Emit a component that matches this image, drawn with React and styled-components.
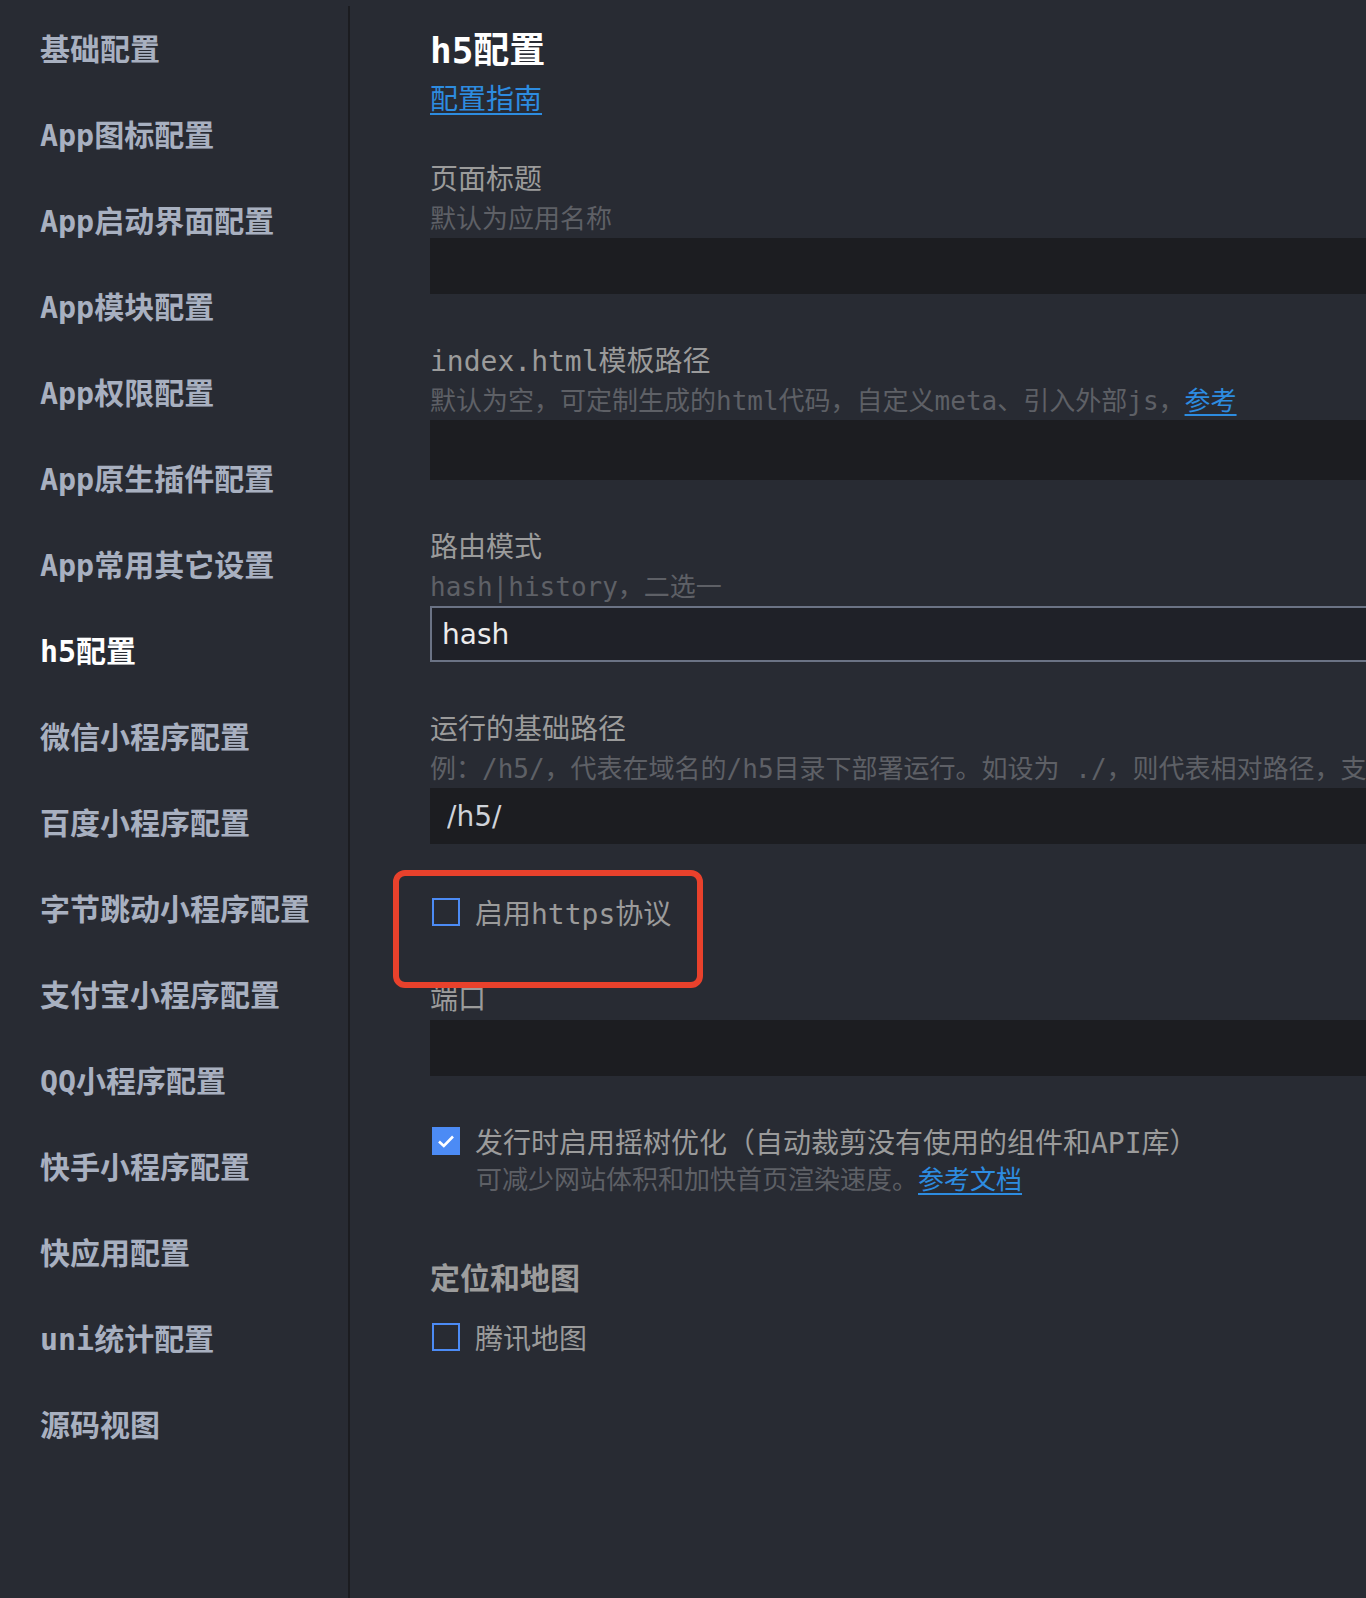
import React, { useState } from 'react';
import styled, { createGlobalStyle } from 'styled-components';

const GlobalStyle = createGlobalStyle`
  html, body {
    margin: 0;
    padding: 0;
    background-color: #282b33;
  }
  body {
    font-family: 'DejaVu Sans Mono', 'Noto Sans CJK SC', monospace;
    overflow-x: hidden;
  }
  * {
    box-sizing: border-box;
  }
`;

const StyledPage = styled.div`
  display: flex;
  min-height: 100vh;
  overflow: hidden;
  background-color: #282b33;
`;

const StyledSidebar = styled.nav`
  flex-shrink: 0;
  width: 350px;
  margin-top: 6px;
  padding-top: 0;
  border-right: 2px solid #1b1c20;
`;

const StyledNavList = styled.div`
  margin-top: -2px;
`;

const StyledNavItem = styled.div`
  display: flex;
  align-items: center;
  height: 86px;
  padding-left: 40px;
  font-family: 'DejaVu Sans Mono', 'Noto Sans CJK SC', monospace;
  font-size: 30px;
  font-weight: 700;
  color: ${(props) => (props.$active ? '#ffffff' : '#a8b0c0')};
  white-space: nowrap;
  cursor: pointer;
`;

const StyledMain = styled.main`
  flex: 1;
  min-width: 0;
  padding: 29px 0 60px 80px;
  overflow: hidden;
`;

const StyledTitle = styled.h1`
  margin: 0;
  font-size: 36px;
  line-height: 44px;
  font-weight: 700;
  color: #ffffff;
`;

const StyledLink = styled.a`
  color: #2d8ce0;
  text-decoration: underline;
  text-decoration-thickness: 2px;
  text-underline-offset: 4px;
  cursor: pointer;
`;

const StyledGuide = styled.div`
  margin: 9px 0 42px;
  font-size: 28px;
  line-height: 36px;
`;

const StyledField = styled.div`
  width: 1100px;
  margin-bottom: ${(props) => (props.$gap !== undefined ? props.$gap : 48)}px;
`;

const StyledLabel = styled.div`
  font-size: 28px;
  line-height: 40px;
  color: #9b9b9b;
  white-space: nowrap;
`;

const StyledDesc = styled.div`
  font-size: 26px;
  line-height: 38px;
  color: #5e6066;
  white-space: nowrap;
`;

const StyledInput = styled.input`
  display: block;
  width: 100%;
  height: ${(props) => props.$height || 56}px;
  padding: 0 ${(props) => (props.$focused ? 10 : 17)}px;
  font-family: 'DejaVu Sans', 'Noto Sans CJK SC', sans-serif;
  font-size: 28px;
  color: ${(props) => (props.$focused ? '#ececec' : '#cfd3da')};
  background-color: ${(props) => (props.$focused ? '#1f2128' : '#1c1d21')};
  border: ${(props) => (props.$focused ? '2px solid #6b7385' : 'none')};
  outline: none;
`;

const StyledCheckRow = styled.label`
  position: relative;
  display: flex;
  align-items: center;
  gap: 15px;
  height: 40px;
  padding-left: 2px;
  font-size: 28px;
  color: #9b9b9b;
  white-space: nowrap;
  cursor: pointer;
`;

const StyledBox = styled.span`
  display: flex;
  align-items: center;
  justify-content: center;
  flex-shrink: 0;
  width: 28px;
  height: 28px;
  border: 2px solid #4c8bf5;
  background-color: ${(props) => (props.$checked ? '#4c8bf5' : 'transparent')};
`;

const StyledSubDesc = styled(StyledDesc)`
  padding-left: 46px;
`;

const StyledHighlight = styled.span`
  position: absolute;
  left: -37px;
  top: -22px;
  width: 310px;
  height: 118px;
  border: 6px solid #e8412c;
  border-radius: 12px;
  pointer-events: none;
`;

const StyledHeading = styled.div`
  margin: 60px 0 18px;
  font-size: 30px;
  line-height: 40px;
  font-weight: 700;
  color: #9d9d9d;
`;

const navItems = [
  '基础配置',
  'App图标配置',
  'App启动界面配置',
  'App模块配置',
  'App权限配置',
  'App原生插件配置',
  'App常用其它设置',
  'h5配置',
  '微信小程序配置',
  '百度小程序配置',
  '字节跳动小程序配置',
  '支付宝小程序配置',
  'QQ小程序配置',
  '快手小程序配置',
  '快应用配置',
  'uni统计配置',
  '源码视图',
];

const Checkbox = ({ checked, onChange, children, highlight }) => (
  <StyledCheckRow onClick={onChange}>
    <StyledBox $checked={checked}>
      {checked && (
        <svg width='18' height='14' viewBox='0 0 18 14'>
          <path d='M2 7.5 L6.8 12 L16 2.5' fill='none' stroke='#fff' strokeWidth='2.6' />
        </svg>
      )}
    </StyledBox>
    {children}
    {highlight && <StyledHighlight />}
  </StyledCheckRow>
);

const App = () => {
  const [active, setActive] = useState('h5配置');
  const [https, setHttps] = useState(false);
  const [treeShaking, setTreeShaking] = useState(true);
  const [tencentMap, setTencentMap] = useState(false);

  return (
    <StyledPage>
      <GlobalStyle />
      <StyledSidebar>
        <StyledNavList>
          {navItems.map((item) => (
            <StyledNavItem key={item} $active={item === active} onClick={() => setActive(item)}>
              {item}
            </StyledNavItem>
          ))}
        </StyledNavList>
      </StyledSidebar>
      <StyledMain>
        <StyledTitle>h5配置</StyledTitle>
        <StyledGuide>
          <StyledLink>配置指南</StyledLink>
        </StyledGuide>

        <StyledField>
          <StyledLabel>页面标题</StyledLabel>
          <StyledDesc>默认为应用名称</StyledDesc>
          <StyledInput />
        </StyledField>

        <StyledField>
          <StyledLabel>index.html模板路径</StyledLabel>
          <StyledDesc>
            默认为空，可定制生成的html代码，自定义meta、引入外部js，<StyledLink>参考</StyledLink>
          </StyledDesc>
          <StyledInput $height={60} />
        </StyledField>

        <StyledField>
          <StyledLabel>路由模式</StyledLabel>
          <StyledDesc>hash|history，二选一</StyledDesc>
          <StyledInput $focused defaultValue='hash' />
        </StyledField>

        <StyledField>
          <StyledLabel>运行的基础路径</StyledLabel>
          <StyledDesc>
            例：/h5/，代表在域名的/h5目录下部署运行。如设为 ./，则代表相对路径，支持file协议打开，此时路由模式强制为hash模式。
          </StyledDesc>
          <StyledInput defaultValue='/h5/' />
        </StyledField>

        <StyledField>
          <Checkbox checked={https} onChange={() => setHttps(!https)} highlight>
            启用https协议
          </Checkbox>
        </StyledField>

        <StyledField $gap={45}>
          <StyledLabel>端口</StyledLabel>
          <StyledInput />
        </StyledField>

        <StyledField $gap={0}>
          <Checkbox checked={treeShaking} onChange={() => setTreeShaking(!treeShaking)}>
            发行时启用摇树优化（自动裁剪没有使用的组件和API库）
          </Checkbox>
          <StyledSubDesc>
            可减少网站体积和加快首页渲染速度。<StyledLink>参考文档</StyledLink>
          </StyledSubDesc>
        </StyledField>

        <StyledHeading>定位和地图</StyledHeading>
        <Checkbox checked={tencentMap} onChange={() => setTencentMap(!tencentMap)}>
          腾讯地图
        </Checkbox>
      </StyledMain>
    </StyledPage>
  );
};

export default App;
